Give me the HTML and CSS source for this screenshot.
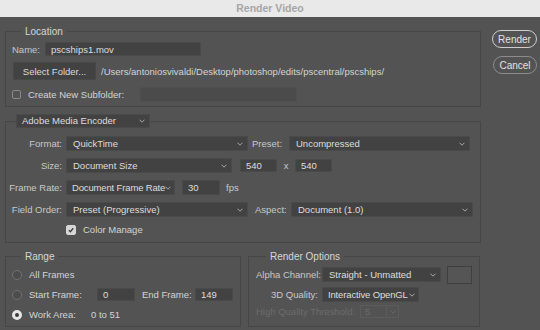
FILE: index.html
```html
<!DOCTYPE html>
<html lang="en">
<head>
    <meta charset="UTF-8">
    <title>Render Video</title>
    <link rel="stylesheet" href="styles.css">
</head>
<body>
    <div class="titlebar">Render Video</div>

    <div class="dialog">
        <div class="main">
            <!-- Location -->
            <fieldset class="group location">
                <legend>Location</legend>
                <div class="row r14">
                    <span class="name-label">Name:</span>
                    <span class="field name-field">pscships1.mov</span>
                </div>
                <div class="row r18 gap6">
                    <span class="button folder-btn">Select Folder...</span>
                    <span class="path">/Users/antoniosvivaldi/Desktop/photoshop/edits/pscentral/pscships/</span>
                </div>
                <div class="row r15 gap7">
                    <span class="checkbox"></span>
                    <span class="check-label subfolder-label">Create New Subfolder:</span>
                    <span class="field off subfolder-field"></span>
                </div>
            </fieldset>

            <!-- Encoder -->
            <fieldset class="group encoder">
                <legend>
                    <span class="select encoder-select"><span>Adobe Media Encoder</span><svg class="chev" viewBox="0 0 6 4"><path d="M.5.7 3 3.2 5.5.7"/></svg></span>
                </legend>
                <div class="row r15">
                    <span class="flabel">Format:</span>
                    <span class="select w182"><span>QuickTime</span><svg class="chev" viewBox="0 0 6 4"><path d="M.5.7 3 3.2 5.5.7"/></svg></span>
                    <span class="preset-label">Preset:</span>
                    <span class="select w181"><span>Uncompressed</span><svg class="chev" viewBox="0 0 6 4"><path d="M.5.7 3 3.2 5.5.7"/></svg></span>
                </div>
                <div class="row r15 gap7">
                    <span class="flabel">Size:</span>
                    <span class="select w166"><span>Document Size</span><svg class="chev" viewBox="0 0 6 4"><path d="M.5.7 3 3.2 5.5.7"/></svg></span>
                    <span class="field num size-w">540</span>
                    <span class="times">x</span>
                    <span class="field num">540</span>
                </div>
                <div class="row r15 gap7">
                    <span class="flabel">Frame Rate:</span>
                    <span class="select w109 tight"><span>Document Frame Rate</span><svg class="chev" viewBox="0 0 6 4"><path d="M.5.7 3 3.2 5.5.7"/></svg></span>
                    <span class="field num fps-field">30</span>
                    <span class="fps">fps</span>
                </div>
                <div class="row r15 gap7">
                    <span class="flabel">Field Order:</span>
                    <span class="select w182"><span>Preset (Progressive)</span><svg class="chev" viewBox="0 0 6 4"><path d="M.5.7 3 3.2 5.5.7"/></svg></span>
                    <span class="aspect-label">Aspect:</span>
                    <span class="select w182"><span>Document (1.0)</span><svg class="chev" viewBox="0 0 6 4"><path d="M.5.7 3 3.2 5.5.7"/></svg></span>
                </div>
                <div class="row r13 gap6">
                    <span class="checkbox checked color-check"><svg viewBox="0 0 10 10"><path d="M2.3 5.2 4.2 7.1 7.8 2.8"/></svg></span>
                    <span class="check-label">Color Manage</span>
                </div>
            </fieldset>

            <div class="bottom">
                <!-- Range -->
                <fieldset class="group range">
                    <legend>Range</legend>
                    <div class="row r15">
                        <span class="radio"></span>
                        <span class="radio-label">All Frames</span>
                    </div>
                    <div class="row r15 gap5">
                        <span class="radio"></span>
                        <span class="radio-label start-label">Start Frame:</span>
                        <span class="field num frame-field">0</span>
                        <span class="end-label">End Frame:</span>
                        <span class="field num frame-field">149</span>
                    </div>
                    <div class="row r15 gap5">
                        <span class="radio on"></span>
                        <span class="radio-label work-label">Work Area:</span>
                        <span>0 to 51</span>
                    </div>
                </fieldset>

                <!-- Render Options -->
                <fieldset class="group options">
                    <legend>Render Options</legend>
                    <div class="row r15">
                        <span class="olabel">Alpha Channel:</span>
                        <span class="select w119"><span>Straight - Unmatted</span><svg class="chev" viewBox="0 0 6 4"><path d="M.5.7 3 3.2 5.5.7"/></svg></span>
                        <span class="swatch"></span>
                    </div>
                    <div class="row r15 gap5">
                        <span class="olabel">3D Quality:</span>
                        <span class="select w97 tight"><span>Interactive OpenGL</span><svg class="chev" viewBox="0 0 6 4"><path d="M.5.7 3 3.2 5.5.7"/></svg></span>
                    </div>
                    <div class="row r13 gap3 dim">
                        <span class="hq-label">High Quality Threshold:</span>
                        <span class="hq-select"><span class="hq-value">5</span><span class="hq-arrow"><svg class="chev" viewBox="0 0 6 4"><path d="M.5.7 3 3.2 5.5.7"/></svg></span></span>
                    </div>
                </fieldset>
            </div>
        </div>

        <div class="actions">
            <span class="pill primary">Render</span>
            <span class="pill">Cancel</span>
        </div>
    </div>
</body>
</html>
```

FILE: styles.css
```css
/* Render Video dialog */
* {
    box-sizing: border-box;
}

body {
    margin: 0;
    width: 540px;
    height: 330px;
    overflow: hidden;
    background-color: #535353;
    font-family: "Liberation Sans", Arial, sans-serif;
    font-size: 9.5px;
    color: #d4d4d4;
}

.titlebar {
    height: 17px;
    line-height: 16px;
    background-color: #e9e9e9;
    color: #a6a6a6;
    font-size: 10.5px;
    font-weight: 700;
    text-align: center;
}

.dialog {
    display: flex;
    padding: 0 0 0 5px;
}

.main {
    width: 476px;
}

/* groups */
.group {
    margin: 0;
    padding: 0;
    min-width: 0;
    border: 1px solid #464646;
}

.group legend {
    padding: 0 4px;
    margin-left: 9px;
    line-height: 13px;
    color: #d6d6d6;
    font-size: 10px;
}

.location {
    margin-top: 8px;
    padding: 4px 0 4px 6px;
}

.encoder {
    margin-top: 7px;
    padding: 8px 0 6px 0;
}

.encoder legend {
    margin-left: 10px;
    padding: 0;
    line-height: 14px;
    font-size: 9.5px;
}

.bottom {
    display: flex;
    margin-top: 7px;
}

.range {
    width: 236px;
    padding: 4px 0 4px 6px;
}

.options {
    width: 232px;
    margin-left: 7px;
    padding: 4px 0 4px 7px;
}

.options legend {
    margin-left: 10px;
}

/* rows */
.row {
    display: flex;
    align-items: center;
    white-space: nowrap;
}

.r13 { height: 13px; }
.r14 { height: 14px; }
.r15 { height: 15px; }
.r18 { height: 18px; }
.gap3 { margin-top: 3px; }
.gap5 { margin-top: 5px; }
.gap6 { margin-top: 6px; }
.gap7 { margin-top: 7px; }

/* controls */
.field {
    display: flex;
    align-items: center;
    height: 100%;
    padding-left: 5px;
    background-color: #424242;
    border: 1px solid #4a4a4a;
    color: #dedede;
}

.field.off {
    background-color: #4b4b4b;
    border-color: #4f4f4f;
}

.num {
    width: 37px;
}

.select {
    display: flex;
    align-items: center;
    justify-content: space-between;
    height: 15px;
    padding: 0 4px 0 6px;
    background-color: #424242;
    border: 1px solid #4a4a4a;
    color: #dedede;
    overflow: hidden;
}

.select.tight {
    padding-left: 5px;
    padding-right: 3px;
    letter-spacing: -0.15px;
}

.chev {
    width: 6px;
    height: 4px;
    flex-shrink: 0;
    fill: none;
    stroke: #a8a8a8;
    stroke-width: 1;
}

.encoder-select {
    width: 134px;
    height: 14px;
    padding-left: 5px;
}

.w97 { width: 97px; }
.w109 { width: 109px; }
.w119 { width: 119px; }
.w166 { width: 166px; }
.w181 { width: 181px; }
.w182 { width: 182px; }

.button {
    display: flex;
    align-items: center;
    justify-content: center;
    height: 18px;
    background-color: #424242;
    border: 1px solid #484848;
    color: #dadada;
}

.checkbox {
    width: 9px;
    height: 9px;
    border: 1px solid #8a8a8a;
    border-radius: 2px;
    flex-shrink: 0;
}

.checkbox.checked {
    width: 10px;
    height: 10px;
    background-color: #d6d6d6;
    border-color: #d6d6d6;
}

.checkbox svg {
    display: block;
    width: 8px;
    height: 8px;
    fill: none;
    stroke: #3a3a3a;
    stroke-width: 1.6;
}

.radio {
    width: 10px;
    height: 10px;
    border-radius: 50%;
    background-color: #4c4c4c;
    border: 1px solid #727272;
    flex-shrink: 0;
}

.radio.on {
    background-color: #3a3a3a;
    border: 3px solid #e6e6e6;
}

/* location bits */
.name-label {
    width: 33px;
    color: #c8c8c8;
}

.name-field {
    width: 156px;
}

.folder-btn {
    width: 83px;
    margin-left: 1px;
}

.path {
    margin-left: 5px;
}

.check-label {
    margin-left: 7px;
}

.subfolder-label {
    width: 102px;
}

.subfolder-field {
    width: 157px;
    margin-left: 10px;
}

/* encoder bits */
.flabel {
    width: 56px;
    margin-right: 4px;
    text-align: right;
    color: #c8c8c8;
}

.preset-label {
    width: 37px;
    margin-left: 4px;
    color: #c8c8c8;
}

.aspect-label {
    width: 36px;
    margin-left: 7px;
    color: #c8c8c8;
}

.size-w {
    margin-left: 8px;
    height: 13px;
}

.size-w + .times + .field {
    height: 13px;
}

.times {
    width: 18px;
    text-align: center;
    color: #c8c8c8;
}

.fps-field {
    width: 38px;
    margin-left: 7px;
}

.fps {
    margin-left: 6px;
    color: #c8c8c8;
}

.color-check {
    margin-left: 60px;
}

/* range bits */
.radio-label {
    margin-left: 7px;
}

.start-label {
    width: 68px;
}

.work-label {
    width: 62px;
}

.frame-field {
    width: 38px;
    height: 13px;
}

.end-label {
    width: 53px;
    margin-left: 7px;
}

/* render options bits */
.olabel {
    width: 62px;
    margin-right: 4px;
    text-align: right;
    color: #c8c8c8;
}

.swatch {
    width: 25px;
    height: 18px;
    margin-left: 6px;
    flex-shrink: 0;
    border: 1px solid #3f3f3f;
    background-color: #555;
}

.dim {
    color: #6c6c6c;
}

.hq-label {
    width: 104px;
}

.hq-select {
    display: flex;
    height: 13px;
    border: 1px solid #5c5c5c;
}

.hq-value {
    width: 26px;
    padding-left: 4px;
    line-height: 11px;
    border-right: 1px solid #5c5c5c;
}

.hq-arrow {
    display: flex;
    align-items: center;
    justify-content: center;
    width: 11px;
}

.hq-arrow .chev {
    stroke: #6a6a6a;
}

/* buttons on the right */
.actions {
    display: flex;
    flex-direction: column;
    align-items: flex-end;
    gap: 8px;
    margin-top: 13px;
    margin-left: 11px;
}

.pill {
    display: flex;
    align-items: center;
    justify-content: center;
    width: 44px;
    height: 18px;
    border: 1px solid #8c8c8c;
    border-radius: 9px;
    color: #e2e2e2;
    font-size: 10px;
}

.pill.primary {
    width: 45px;
    border-color: #cdcdcd;
}
```
